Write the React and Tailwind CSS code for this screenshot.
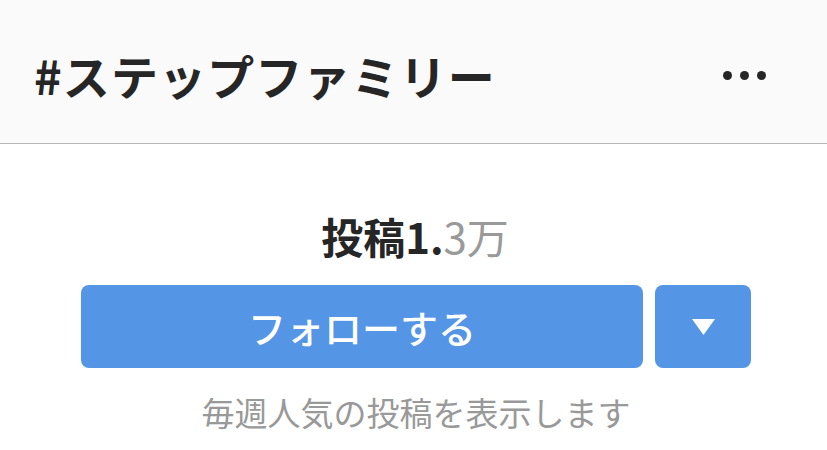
import React from 'react';

export default function App() {
  const jp = { fontFamily: '"Noto Sans CJK JP", "Noto Sans", sans-serif' };
  return (
    <div className="w-[827px] h-[450px] bg-white overflow-hidden" style={jp}>
      {/* header */}
      <div className="h-[144px] bg-[#fafafa] border-b border-[#b5b5b5] flex items-center justify-between pl-[34px] pr-[61px]">
        <h1 className="text-[47px] font-bold text-[#262626] tracking-[1.1px] leading-none pt-[6px]">#ステップファミリー</h1>
        <div className="flex items-center gap-[8px] pt-[8px]">
          <span className="w-[9px] h-[9px] rounded-full bg-[#262626]" />
          <span className="w-[9px] h-[9px] rounded-full bg-[#262626]" />
          <span className="w-[9px] h-[9px] rounded-full bg-[#262626]" />
        </div>
      </div>

      {/* stats */}
      <div className="flex justify-center pt-[71px] pl-[3px]">
        <div className="text-[42px] font-bold leading-none h-[42px]">
          <span className="text-[#262626]">投稿1.</span>
          <span className="text-[#999999] font-normal">3万</span>
        </div>
      </div>

      {/* buttons */}
      <div className="flex gap-[12px] pl-[81px] mt-[28px]">
        <button className="w-[562px] h-[83px] rounded-[8px] bg-[#5495e6] text-white text-[38px] font-medium flex items-center justify-center">
          フォローする
        </button>
        <button className="w-[96px] h-[83px] rounded-[8px] bg-[#5495e6] flex items-center justify-center">
          <svg width="23" height="16" viewBox="0 0 23 16">
            <path d="M0 0 L23 0 L11.5 16 Z" fill="#ffffff" />
          </svg>
        </button>
      </div>

      {/* caption */}
      <p className="text-center text-[33px] text-[#999999] mt-[28px] leading-none pl-[5px]">毎週人気の投稿を表示します</p>
    </div>
  );
}
